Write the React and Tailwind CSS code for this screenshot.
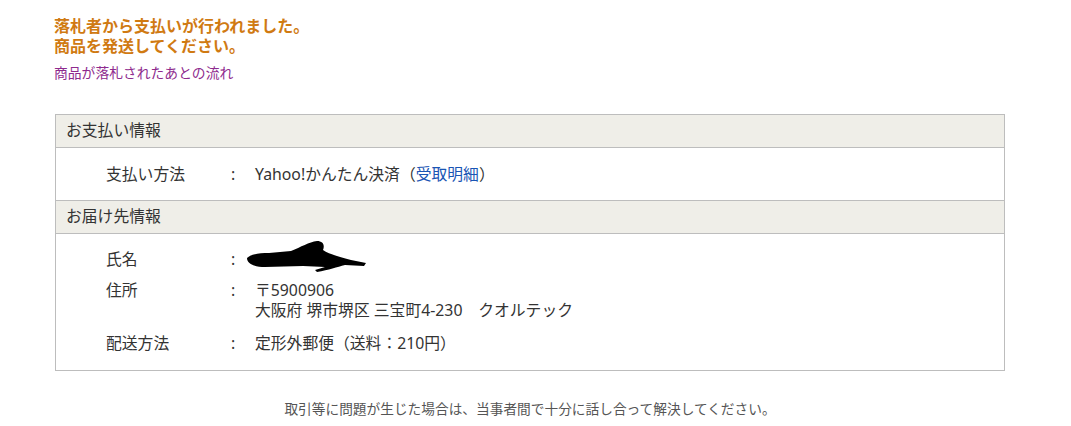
import React from 'react';

const font = { fontFamily: '"Noto Sans", "Noto Sans CJK JP", sans-serif' };

function Row({ label, children, className = '' }) {
  return (
    <div className={`flex leading-[20px] ${className}`}>
      <div className="w-[125px] shrink-0">{label}</div>
      <div className="w-[24px] shrink-0">:</div>
      <div>{children}</div>
    </div>
  );
}

function Scribble() {
  return (
    <svg width="126" height="36" viewBox="0 0 126 36" className="absolute left-[-12px] top-[-10px]">
      <path
        d="M4 19 C8 15 16 14 26 14 L48 12 C58 8 66 3 74 2 C80 2 82 6 80 11 C86 15 96 18 108 21 L123 24 L121 27 L102 26 C94 28 86 31 74 33 L72 31 L82 28 L60 27 L22 28 C12 28 4 25 4 19 Z"
        fill="#000"
      />
    </svg>
  );
}

export default function App() {
  return (
    <div className="w-[1071px] h-[426px] bg-white text-[#333]" style={font}>
      <div className="pt-[16px] pl-[54px]">
        <h1 className="text-[16px] leading-[20px] font-bold text-[#d07a12]">
          落札者から支払いが行われました。
          <br />
          商品を発送してください。
        </h1>
        <p className="mt-[8px] text-[13.8px] leading-[18px] text-[#8e2a8e]">商品が落札されたあとの流れ</p>
      </div>

      <div className="ml-[55px] mt-[32px] w-[950px] border border-[#bdbdbd] text-[15.8px]">
        <div className="h-[33px] flex items-center pl-[10px] bg-[#efeee8] border-b border-[#bdbdbd]">お支払い情報</div>
        <div className="pl-[50px] py-[16px] border-b border-[#bdbdbd]">
          <Row label="支払い方法">
            Yahoo!かんたん決済（<span className="text-[#1a55b4]">受取明細</span>）
          </Row>
        </div>
        <div className="h-[33px] flex items-center pl-[10px] bg-[#efeee8] border-b border-[#bdbdbd]">お届け先情報</div>
        <div className="pl-[50px] pt-[15px] pb-[17px] flex flex-col">
          <Row label="氏名">
            <div className="relative w-[100px] h-[20px]">
              <Scribble />
            </div>
          </Row>
          <Row label="住所" className="mt-[11px]">
            〒5900906
            <br />
            大阪府 堺市堺区 三宝町4-230　クオルテック
          </Row>
          <Row label="配送方法" className="mt-[13px]">定形外郵便（送料：210円）</Row>
        </div>
      </div>

      <p className="ml-[55px] w-[950px] mt-[29px] text-center text-[13.7px] leading-[18px] text-[#555]">
        取引等に問題が生じた場合は、当事者間で十分に話し合って解決してください。
      </p>
    </div>
  );
}
